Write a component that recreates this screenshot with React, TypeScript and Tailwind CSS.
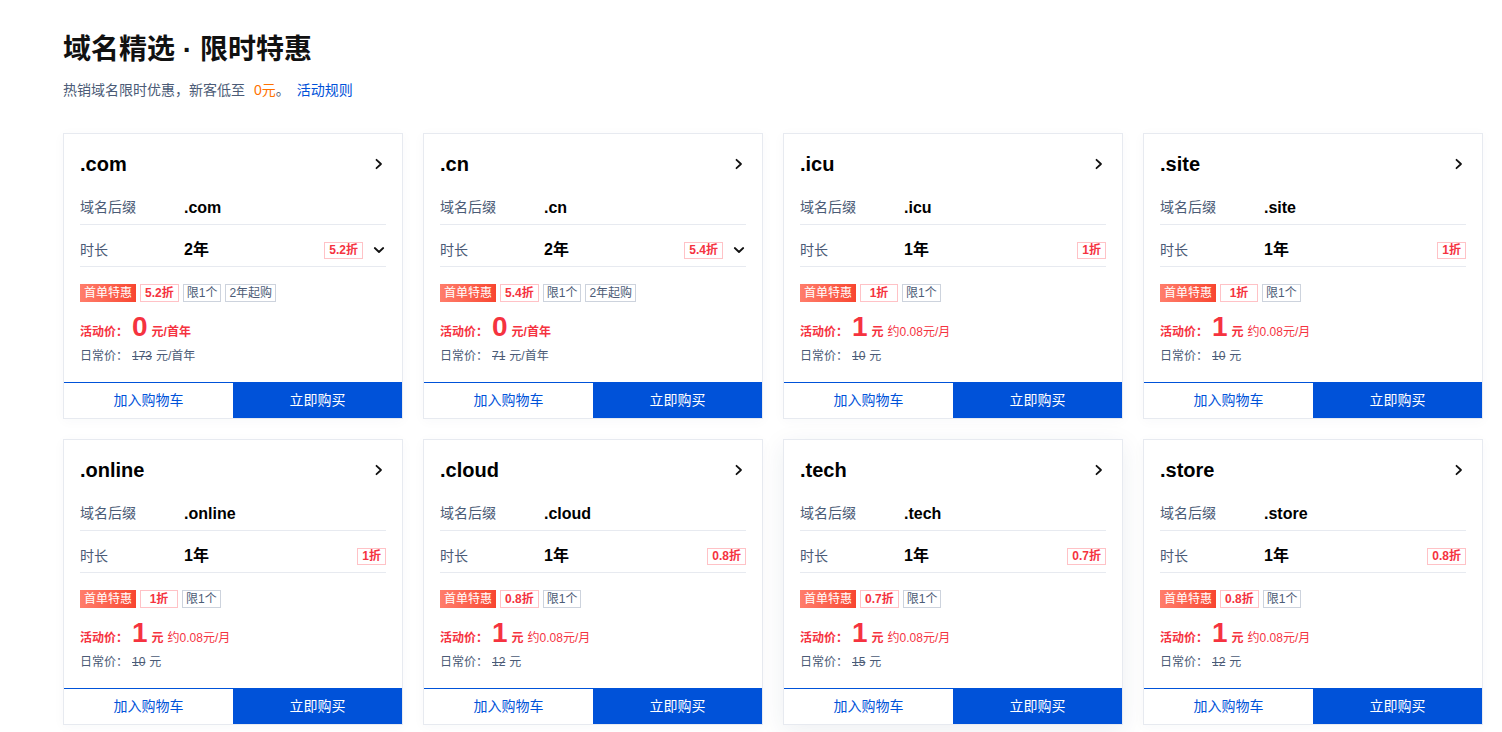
import React from 'react';

type Domain = {
  name: string;
  years: string;
  discount: string;
  tags: string[];
  price: string;
  unit: string;
  monthly?: string;
  regular: string;
  regularUnit: string;
  dropdown?: boolean;
  hovered?: boolean;
};

const domains: Domain[] = [
  { name: '.com', years: '2年', discount: '5.2折', tags: ['限1个', '2年起购'], price: '0', unit: '元/首年', regular: '173', regularUnit: '元/首年', dropdown: true },
  { name: '.cn', years: '2年', discount: '5.4折', tags: ['限1个', '2年起购'], price: '0', unit: '元/首年', regular: '71', regularUnit: '元/首年', dropdown: true },
  { name: '.icu', years: '1年', discount: '1折', tags: ['限1个'], price: '1', unit: '元', monthly: '约0.08元/月', regular: '10', regularUnit: '元' },
  { name: '.site', years: '1年', discount: '1折', tags: ['限1个'], price: '1', unit: '元', monthly: '约0.08元/月', regular: '10', regularUnit: '元' },
  { name: '.online', years: '1年', discount: '1折', tags: ['限1个'], price: '1', unit: '元', monthly: '约0.08元/月', regular: '10', regularUnit: '元' },
  { name: '.cloud', years: '1年', discount: '0.8折', tags: ['限1个'], price: '1', unit: '元', monthly: '约0.08元/月', regular: '12', regularUnit: '元' },
  { name: '.tech', years: '1年', discount: '0.7折', tags: ['限1个'], price: '1', unit: '元', monthly: '约0.08元/月', regular: '15', regularUnit: '元', hovered: true },
  { name: '.store', years: '1年', discount: '0.8折', tags: ['限1个'], price: '1', unit: '元', monthly: '约0.08元/月', regular: '12', regularUnit: '元' },
];

const ChevronRight = () => (
  <svg width="12" height="12" viewBox="0 0 12 12" fill="none">
    <path d="M3.5 1.8 L8 6 L3.5 10.2" stroke="#111" strokeWidth="1.8" strokeLinecap="round" strokeLinejoin="round" />
  </svg>
);

const ChevronDown = () => (
  <svg width="12" height="12" viewBox="0 0 12 12" fill="none">
    <path d="M1.8 4 L6 8 L10.2 4" stroke="#111" strokeWidth="1.8" strokeLinecap="round" strokeLinejoin="round" />
  </svg>
);

const DomainCard: React.FC<{ d: Domain }> = ({ d }) => (
  <div
    className={`flex flex-col bg-white border border-[#e7eaf0] ${
      d.hovered ? 'shadow-[0_6px_24px_rgba(30,50,90,0.08)]' : 'shadow-[0_2px_12px_rgba(30,50,90,0.03)]'
    }`}
  >
    <div className="px-4 pt-[19px]">
      <div className="flex items-center justify-between h-[22px]">
        <span className="text-[20px] leading-[22px] font-bold text-black">{d.name}</span>
        <span className="mr-[1px]">
          <ChevronRight />
        </span>
      </div>
      <div className="flex items-center h-[50px] pt-[16px] border-b border-[#e7eaf0]">
        <span className="w-[104px] text-[14px] text-[#4b5b76]">域名后缀</span>
        <span className="text-[16px] font-bold text-black">{d.name}</span>
      </div>
      <div className="flex items-center h-[42px] pt-[9px] border-b border-[#e7eaf0]">
        <span className="w-[104px] text-[14px] text-[#4b5b76]">时长</span>
        <span className="text-[16px] font-bold text-black">{d.years}</span>
        <span className="ml-auto min-w-[22px] h-[17px] px-[4px] flex items-center justify-center border border-[#ffc2c6] text-[12px] leading-none font-bold text-[#f5333f]">
          {d.discount}
        </span>
        {d.dropdown && (
          <span className="ml-[10px] mr-[1px]">
            <ChevronDown />
          </span>
        )}
      </div>
      <div className="flex items-center gap-[4px] mt-[17px] h-[18px]">
        <span className="h-[18px] px-[4px] flex items-center text-[12px] text-white bg-gradient-to-r from-[#ff7d6b] to-[#f8452f]">
          首单特惠
        </span>
        <span className="h-[18px] min-w-[38px] px-[4px] flex items-center justify-center border border-[#ffc2c6] text-[12px] font-bold text-[#f5333f]">
          {d.discount}
        </span>
        {d.tags.map((t) => (
          <span key={t} className="h-[18px] px-[3px] flex items-center border border-[#cdd3dd] text-[12px] text-[#4b5b76]">
            {t}
          </span>
        ))}
      </div>
      <div className="flex items-baseline mt-[11px] h-[28px] leading-[28px] text-[#f5333f]">
        <span className="w-[52px] text-[12px] font-bold">活动价：</span>
        <span className="text-[28px] font-bold mr-[4px]">{d.price}</span>
        <span className="text-[12px] font-bold">{d.unit}</span>
        {d.monthly && <span className="text-[12px] ml-[4px]">{d.monthly}</span>}
      </div>
      <div className="flex items-center mt-[7px] h-[16px] text-[12px] text-[#4b5b76]">
        <span className="w-[52px]">日常价：</span>
        <span className="line-through mr-[4px]">{d.regular}</span>
        <span>{d.regularUnit}</span>
      </div>
    </div>
    <div className="flex mt-[18px] h-[36px]">
      <button className="flex-1 flex items-center justify-center border-t border-[#0052d9] text-[14px] text-[#0052d9] bg-white">
        加入购物车
      </button>
      <button className="flex-1 flex items-center justify-center bg-[#0052d9] text-[14px] text-white">
        立即购买
      </button>
    </div>
  </div>
);

const App: React.FC = () => {
  return (
    <section
      className="min-h-screen bg-white pl-[63px] pr-[19px] pt-[32px]"
      style={{ fontFamily: '"Liberation Sans", "Noto Sans CJK SC", sans-serif' }}
    >
      <h2 className="text-[28px] leading-[36px] font-bold text-[#111]">域名精选 · 限时特惠</h2>
      <p className="mt-[12px] text-[14px] leading-[20px] text-[#4b5b76]">
        热销域名限时优惠，新客低至
        <span className="ml-[9px] text-[#ff7200]">0元</span>
        。
        <a className="ml-[7px] text-[#0052d9]">活动规则</a>
      </p>
      <div className="grid grid-cols-4 gap-x-[20px] gap-y-[20px] mt-[33px] w-[1420px]">
        {domains.map((d) => (
          <DomainCard key={d.name} d={d} />
        ))}
      </div>
    </section>
  );
};

export default App;
